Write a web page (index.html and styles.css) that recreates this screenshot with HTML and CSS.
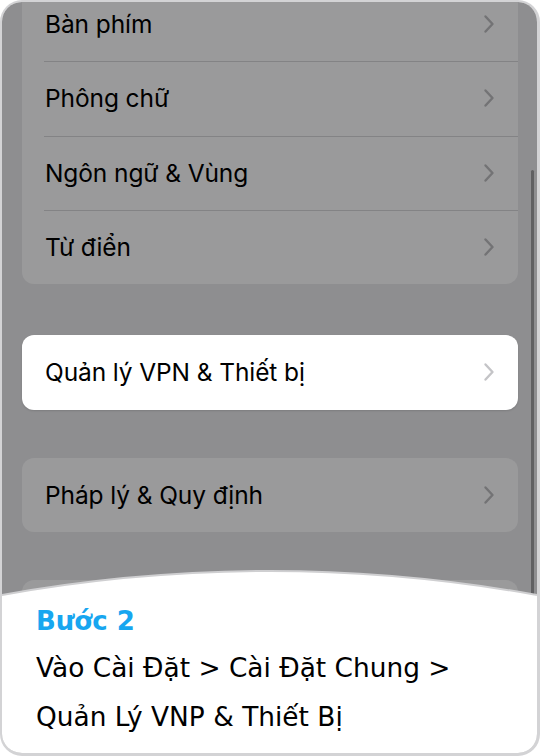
FILE: index.html
```html
<!DOCTYPE html>
<html lang="vi">
<head>
<meta charset="utf-8">
<title>Bước 2</title>
<link rel="stylesheet" href="styles.css">
</head>
<body>
<div class="frame">
  <div class="screen">
    <div class="group group-top">
      <div class="row"><span class="label">Bàn phím</span><svg class="chev" viewBox="0 0 12 20"><path d="M2.5 2.5 L9.5 10 L2.5 17.5"/></svg></div>
      <div class="row"><span class="label">Phông chữ</span><svg class="chev" viewBox="0 0 12 20"><path d="M2.5 2.5 L9.5 10 L2.5 17.5"/></svg></div>
      <div class="row"><span class="label">Ngôn ngữ &amp; Vùng</span><svg class="chev" viewBox="0 0 12 20"><path d="M2.5 2.5 L9.5 10 L2.5 17.5"/></svg></div>
      <div class="row"><span class="label">Từ điển</span><svg class="chev" viewBox="0 0 12 20"><path d="M2.5 2.5 L9.5 10 L2.5 17.5"/></svg></div>
    </div>
    <div class="group group-hl">
      <div class="row"><span class="label">Quản lý VPN &amp; Thiết bị</span><svg class="chev" viewBox="0 0 12 20"><path d="M2.5 2.5 L9.5 10 L2.5 17.5"/></svg></div>
    </div>
    <div class="group">
      <div class="row"><span class="label">Pháp lý &amp; Quy định</span><svg class="chev" viewBox="0 0 12 20"><path d="M2.5 2.5 L9.5 10 L2.5 17.5"/></svg></div>
    </div>
    <div class="group">
      <div class="row"></div>
    </div>
    <div class="scrollbar"></div>
  </div>
  <div class="panel">
    <svg class="curve" viewBox="0 0 540 28" preserveAspectRatio="none">
      <path class="curve-fill" d="M0 27 Q270 -21 540 27 L540 28 L0 28 Z"/>
      <path class="curve-line" d="M0 27 Q270 -21 540 27"/>
    </svg>
    <div class="panel-body">
      <div class="step">Bước 2</div>
      <div class="desc">Vào Cài Đặt &gt; Cài Đặt Chung &gt;</div>
      <div class="desc">Quản Lý VNP &amp; Thiết Bị</div>
    </div>
  </div>
</div>
</body>
</html>
```

FILE: styles.css
```css
* { box-sizing: border-box; }
html, body { margin: 0; padding: 0; background: #ffffff; }

.frame {
  position: relative;
  width: 540px;
  height: 756px;
  border-style: solid;
  border-color: #d3d3d5;
  border-width: 2px 3px 3px 2px;
  border-radius: 22px;
  overflow: hidden;
  background: #8e8e90;
}

.screen {
  height: 100%;
  padding: 0 19px 0 20px;
  display: flex;
  flex-direction: column;
  background: #8e8e90;
  font-family: Inter, "Noto Sans", sans-serif;
}

.group {
  background: #9a9a9b;
  border-radius: 12px;
  overflow: hidden;
  flex: none;
}
.group-top { margin-top: -15px; }
.group-hl {
  margin-top: 51px;
  background: #ffffff;
  box-shadow: 0 1px 2px rgba(0,0,0,0.12);
}
.group-hl + .group { margin-top: 48px; }
.group + .group + .group + .group { margin-top: 48px; }

.row {
  height: 74.33px;
  display: flex;
  align-items: center;
  justify-content: space-between;
  padding: 0 23px 0 23px;
  position: relative;
}
.group-top .row + .row::before {
  content: "";
  position: absolute;
  left: 22px;
  right: 0;
  top: 0;
  height: 1px;
  background: #838385;
}

.label {
  font-size: 24.5px;
  color: #000;
  letter-spacing: -0.1px;
}

.chev {
  width: 12px;
  height: 20px;
  fill: none;
  stroke: #737375;
  stroke-width: 2.4;
  stroke-linecap: round;
  stroke-linejoin: round;
}
.group-hl .chev { stroke: #c4c4c7; }

.scrollbar {
  position: absolute;
  right: 3px;
  top: 168px;
  width: 3px;
  height: 430px;
  border-radius: 2px;
  background: #606062;
}

.panel {
  position: absolute;
  left: 0;
  right: 0;
  bottom: 0;
  height: 185px;
  display: flex;
  flex-direction: column;
}
.curve {
  display: block;
  width: 100%;
  height: 28px;
  flex: none;
  overflow: visible;
}
.curve-fill { fill: #ffffff; }
.curve-line { fill: none; stroke: #cfcfd1; stroke-width: 2; }

.panel-body {
  flex: 1;
  background: #ffffff;
  padding: 3px 0 0 34px;
  font-family: "DejaVu Sans", Verdana, sans-serif;
}
.step {
  color: #17a6f0;
  font-size: 26px;
  font-weight: bold;
  line-height: 44px;
}
.desc {
  color: #000;
  font-size: 26.4px;
  line-height: 49px;
}
```
